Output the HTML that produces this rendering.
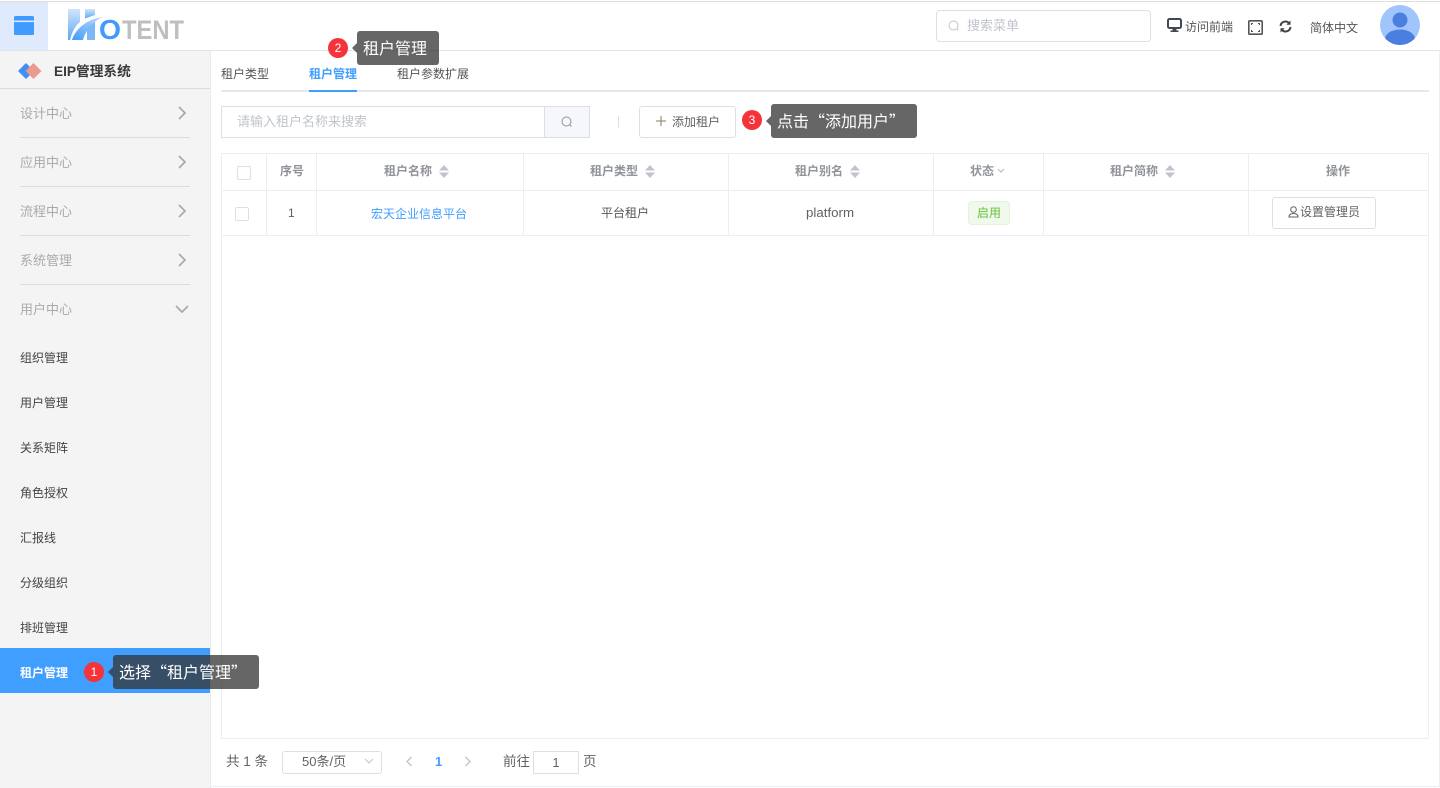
<!DOCTYPE html>
<html lang="zh"><head><meta charset="utf-8"><title>租户管理</title>
<style>
*{box-sizing:border-box}
html,body{margin:0;padding:0;width:1440px;height:788px;overflow:hidden;background:#fff}
body{position:relative;font-family:"Liberation Sans","Noto Sans CJK SC",sans-serif;font-size:12px;color:#555}
.a{position:absolute}
.t{position:absolute;white-space:nowrap;line-height:16px;height:16px}
.side{left:0;top:51px;width:210px;height:737px;background:#f4f4f4}
.hr{position:absolute;left:20px;width:170px;height:1px;background:#dcdcdc}
.g{color:#aaa;font-size:13px;left:20px}
.m{color:#444;font-size:12px;left:20px}
.tip{position:absolute;background:rgba(51,51,51,.75);border-radius:3px;color:#fff;font-family:"Noto Sans CJK SC",sans-serif;font-size:16px;line-height:32px;height:34px;white-space:nowrap;padding-left:6px}
.tip:before{content:"";position:absolute;left:-5px;top:12px;border:5px solid transparent;border-left:0;border-right-color:rgba(51,51,51,.75)}
.dot{position:absolute;width:20px;height:20px;border-radius:50%;background:#f5333a;color:#fff;font-size:12px;line-height:20px;text-align:center}
.v{position:absolute;top:154px;width:1px;height:82px;background:#ebeef5}
.h{position:absolute;left:222px;width:1206px;height:1px;background:#ebeef5}
.th{color:#909399;font-weight:bold;font-size:12px;top:163px;text-align:center}
.sort{position:absolute;top:165px;width:10px;height:13px}
.cb{position:absolute;width:14px;height:14px;border:1px solid #dcdfe6;border-radius:2px;background:#fff}
svg{position:absolute;display:block}
</style></head><body>

<!-- top bar -->
<div class="a" style="left:0;top:1px;width:1440px;height:50px;background:#fff;border-top:1px solid #ddd;border-bottom:1px solid #e4e4e4"></div>
<div class="a" style="left:0;top:2px;width:48px;height:48px;background:#dfeafc"></div>
<svg style="left:14px;top:16px" width="20" height="19" viewBox="0 0 20 19"><rect width="20" height="19" rx="1.5" fill="#3f9bfd"/><rect y="4.5" width="20" height="1.6" fill="#dfeafc"/></svg>

<!-- logo -->
<svg style="left:66px;top:6px" width="122" height="38" viewBox="0 0 122 38">
<defs>
<linearGradient id="lg" x1="0" y1="0" x2="0" y2="1"><stop offset="0" stop-color="#d3e5f9"/><stop offset="1" stop-color="#5aa9f8"/></linearGradient>
<linearGradient id="lh" x1="0" y1="1" x2="1" y2="0"><stop offset="0" stop-color="#3f9bfd"/><stop offset="1" stop-color="#c5dcf6"/></linearGradient>
</defs>
<path d="M2 3H14V16C9 20 6 26 4 34H2z" fill="url(#lg)"/>
<path d="M6 34C9 24 20 13 37 11 28 15 20 23 17 34z" fill="url(#lh)"/>
<path d="M19 3H29V9L19 12.500z" fill="url(#lg)"/>
<path d="M21 22L29 16V34H21z" fill="#7ab8f8"/>
<text x="33" y="33" font-family="Liberation Sans" font-weight="bold" font-size="28" fill="#3f9bfd" textLength="22" lengthAdjust="spacingAndGlyphs">O</text>
<text x="56" y="33" font-family="Liberation Sans" font-weight="bold" font-size="27" fill="#bfbfbf" textLength="62" lengthAdjust="spacingAndGlyphs">TENT</text>
</svg>

<!-- top right -->
<div class="a" style="left:936px;top:10px;width:215px;height:32px;border:1px solid #dcdfe6;border-radius:4px;background:#fff"></div>
<svg style="left:948px;top:20px" width="12" height="12" viewBox="0 0 12 12" fill="none" stroke="#c0c4cc" stroke-width="1"><circle cx="5.5" cy="5.5" r="4.5"/><path d="M9 9l1.5 1.5"/></svg>
<div class="t" style="left:967px;top:18px;font-size:13px;color:#c0c4cc">搜索菜单</div>
<svg style="left:1167px;top:18px" width="15" height="15" viewBox="0 0 15 15"><rect x="1" y="1" width="13" height="9" rx="1.500" fill="none" stroke="#3c4a54" stroke-width="2"/><path d="M5.500 11h4v1.500h2V14H3.500v-1.500h2z" fill="#3c4a54"/></svg>
<div class="t" style="left:1185px;top:19px;color:#555">访问前端</div>
<svg style="left:1248px;top:20px" width="15" height="15" viewBox="0 0 15 15"><rect x=".8" y=".8" width="13.400" height="13.400" rx="1" fill="none" stroke="#555" stroke-width="1.600"/><path d="M3 3h2v1H4v1H3zM12 3v2h-1V4h-1V3zM12 12h-2v-1h1v-1h1zM3 12v-2h1v1h1v1z" fill="#555"/></svg>
<svg style="left:1279px;top:20px" width="13" height="13" viewBox="0 0 13 13" fill="none" stroke="#444" stroke-width="2"><path d="M1.500 6A5 5 0 0 1 10 3"/><path d="M11.500 7A5 5 0 0 1 3 10"/><path d="M11.500.5v4.200H7.300z" fill="#444" stroke="none"/><path d="M1.500 12.500V8.300h4.200z" fill="#444" stroke="none"/></svg>
<div class="t" style="left:1310px;top:20px;color:#555">简体中文</div>
<svg style="left:1380px;top:5px" width="40" height="40" viewBox="0 0 40 40"><defs><clipPath id="c"><circle cx="20" cy="20" r="20"/></clipPath></defs><circle cx="20" cy="20" r="20" fill="#a0c4fb"/><g clip-path="url(#c)" fill="#4a7fe0"><circle cx="20" cy="15" r="7.500"/><ellipse cx="20" cy="34" rx="15" ry="9.500"/></g></svg>

<!-- sidebar -->
<div class="a side"></div>
<div class="a" style="left:210px;top:51px;width:1px;height:737px;background:#e9ebf2"></div>
<svg style="left:18px;top:62px" width="24" height="18" viewBox="0 0 24 18"><path d="M8 1l8 8-8 8-8-8z" fill="#3f8ff5"/><path d="M15.500 1l8 8-8 8-8-8z" fill="#ec9a8d"/></svg>
<div class="t" style="left:54px;top:64px;font-size:13.700px;font-weight:bold;color:#3a3a3a">EIP管理系统</div>
<div class="a" style="left:0;top:88px;width:210px;height:1px;background:#dcdcdc"></div>
<div class="t g" style="top:106px">设计中心</div>
<div class="hr" style="top:137px"></div>
<div class="t g" style="top:155px">应用中心</div>
<div class="hr" style="top:186px"></div>
<div class="t g" style="top:204px">流程中心</div>
<div class="hr" style="top:235px"></div>
<div class="t g" style="top:253px">系统管理</div>
<div class="hr" style="top:284px"></div>
<div class="t g" style="top:302px">用户中心</div>
<svg style="left:176px;top:106px" width="12" height="14" viewBox="0 0 12 14" fill="none" stroke="#a9a9a9" stroke-width="1.700"><path d="M3 1l6 6-6 6"/></svg>
<svg style="left:176px;top:155px" width="12" height="14" viewBox="0 0 12 14" fill="none" stroke="#a9a9a9" stroke-width="1.700"><path d="M3 1l6 6-6 6"/></svg>
<svg style="left:176px;top:204px" width="12" height="14" viewBox="0 0 12 14" fill="none" stroke="#a9a9a9" stroke-width="1.700"><path d="M3 1l6 6-6 6"/></svg>
<svg style="left:176px;top:253px" width="12" height="14" viewBox="0 0 12 14" fill="none" stroke="#a9a9a9" stroke-width="1.700"><path d="M3 1l6 6-6 6"/></svg>
<svg style="left:175px;top:304px" width="14" height="10" viewBox="0 0 14 10" fill="none" stroke="#a9a9a9" stroke-width="1.700"><path d="M1 2l6 6 6-6"/></svg>
<div class="t m" style="top:350px">组织管理</div>
<div class="t m" style="top:395px">用户管理</div>
<div class="t m" style="top:440px">关系矩阵</div>
<div class="t m" style="top:485px">角色授权</div>
<div class="t m" style="top:530px">汇报线</div>
<div class="t m" style="top:575px">分级组织</div>
<div class="t m" style="top:620px">排班管理</div>
<div class="a" style="left:0;top:648px;width:210px;height:45px;background:#409eff"></div>
<div class="t m" style="top:665px;color:#fff;font-weight:bold">租户管理</div>

<!-- tabs -->
<div class="t" style="left:221px;top:66px;color:#555">租户类型</div>
<div class="t" style="left:309px;top:66px;color:#409eff;font-weight:bold">租户管理</div>
<div class="t" style="left:397px;top:66px;color:#555">租户参数扩展</div>
<div class="a" style="left:221px;top:90px;width:1208px;height:2px;background:#e4e7ed"></div>
<div class="a" style="left:309px;top:90px;width:48px;height:2px;background:#409eff"></div>

<!-- search -->
<div class="a" style="left:221px;top:106px;width:369px;height:32px;border:1px solid #dcdfe6;background:#fff"></div>
<div class="a" style="left:544px;top:106px;width:46px;height:32px;border:1px solid #dcdfe6;background:#f5f7fa"></div>
<div class="t" style="left:237px;top:114px;font-size:13px;color:#c0c4cc">请输入租户名称来搜索</div>
<svg style="left:561px;top:116px" width="12" height="12" viewBox="0 0 12 12" fill="none" stroke="#909399" stroke-width="1"><circle cx="5.500" cy="5.500" r="4.500"/><path d="M9 9l1.500 1.500"/></svg>
<div class="a" style="left:618px;top:116px;width:1px;height:12px;background:#dcdfe6"></div>
<div class="a" style="left:639px;top:106px;width:97px;height:32px;border:1px solid #dcdfe6;border-radius:3px;background:#fff"></div>
<svg style="left:656px;top:116px" width="10" height="10" viewBox="0 0 10 10" stroke="#8a7a66" stroke-width="1"><path d="M5 0v10M0 5h10"/></svg>
<div class="t" style="left:672px;top:114px;color:#606266">添加租户</div>

<!-- table -->
<div class="a" style="left:221px;top:153px;width:1208px;height:586px;border:1px solid #ebeef5"></div>
<div class="h" style="top:190px"></div>
<div class="h" style="top:235px"></div>
<div class="v" style="left:266px"></div>
<div class="v" style="left:316px"></div>
<div class="v" style="left:523px"></div>
<div class="v" style="left:728px"></div>
<div class="v" style="left:933px"></div>
<div class="v" style="left:1043px"></div>
<div class="v" style="left:1248px"></div>
<div class="cb" style="left:237px;top:166px"></div>
<div class="cb" style="left:235px;top:207px"></div>
<div class="t th" style="left:280px">序号</div>
<div class="t th" style="left:384px">租户名称</div>
<div class="t th" style="left:590px">租户类型</div>
<div class="t th" style="left:795px">租户别名</div>
<div class="t th" style="left:970px">状态</div>
<div class="t th" style="left:1110px">租户简称</div>
<div class="t th" style="left:1326px">操作</div>
<svg class="sort" style="left:439px" viewBox="0 0 10 13" fill="#c0c4cc"><path d="M5 0l5 5.500H0zM5 13l5-5.500H0z"/></svg>
<svg class="sort" style="left:645px" viewBox="0 0 10 13" fill="#c0c4cc"><path d="M5 0l5 5.500H0zM5 13l5-5.500H0z"/></svg>
<svg class="sort" style="left:850px" viewBox="0 0 10 13" fill="#c0c4cc"><path d="M5 0l5 5.500H0zM5 13l5-5.500H0z"/></svg>
<svg class="sort" style="left:1165px" viewBox="0 0 10 13" fill="#c0c4cc"><path d="M5 0l5 5.500H0zM5 13l5-5.500H0z"/></svg>
<svg style="left:997px;top:168px" width="8" height="6" viewBox="0 0 8 6" fill="none" stroke="#b4b7bd" stroke-width="1"><path d="M1 1l3 3 3-3"/></svg>
<div class="t" style="left:288px;top:205px;color:#606266">1</div>
<div class="t" style="left:371px;top:206px;color:#409eff">宏天企业信息平台</div>
<div class="t" style="left:601px;top:205px;color:#555">平台租户</div>
<div class="t" style="left:806px;top:205px;color:#606266;font-size:13.300px">platform</div>
<div class="a" style="left:968px;top:201px;width:42px;height:24px;background:#f0f9eb;border:1px solid #e1f3d8;border-radius:4px;color:#67c23a;text-align:center;line-height:22px">启用</div>
<div class="a" style="left:1272px;top:197px;width:104px;height:32px;border:1px solid #dcdfe6;border-radius:3px;background:#fff"></div>
<svg style="left:1288px;top:206px" width="11" height="12" viewBox="0 0 11 12" fill="none" stroke="#606266" stroke-width="1"><circle cx="5.500" cy="3.500" r="2.800"/><path d="M1 11c0-2.500 2-3.500 4.500-3.500s4.500 1 4.500 3.500z"/></svg>
<div class="t" style="left:1300px;top:204px;color:#606266">设置管理员</div>

<!-- pagination -->
<div class="t" style="left:226px;top:754px;font-size:13.500px;color:#606266">共 1 条</div>
<div class="a" style="left:282px;top:751px;width:100px;height:23px;border:1px solid #dcdfe6;border-radius:3px"></div>
<div class="t" style="left:302px;top:754px;font-size:13px;color:#606266">50条/页</div>
<svg style="left:364px;top:758px" width="10" height="7" viewBox="0 0 10 7" fill="none" stroke="#c0c4cc" stroke-width="1"><path d="M1 1l4 4 4-4"/></svg>
<svg style="left:405px;top:756px" width="8" height="11" viewBox="0 0 8 11" fill="none" stroke="#c0c4cc" stroke-width="1.400"><path d="M6.500 1L2 5.500 6.500 10"/></svg>
<div class="t" style="left:435px;top:754px;font-size:13px;font-weight:bold;color:#409eff">1</div>
<svg style="left:464px;top:756px" width="8" height="11" viewBox="0 0 8 11" fill="none" stroke="#c0c4cc" stroke-width="1.400"><path d="M1.500 1L6 5.500 1.500 10"/></svg>
<div class="t" style="left:503px;top:754px;font-size:13.500px;color:#606266">前往</div>
<div class="a" style="left:533px;top:751px;width:46px;height:23px;border:1px solid #dcdfe6;text-align:center;line-height:21px;font-size:13px;color:#606266">1</div>
<div class="t" style="left:583px;top:754px;font-size:13.500px;color:#606266">页</div>
<div class="a" style="left:211px;top:786px;width:1229px;height:1px;background:#ebeef5"></div>
<div class="a" style="left:1439px;top:51px;width:1px;height:736px;background:#ebeef5"></div>

<!-- annotations -->
<div class="dot" style="left:84px;top:662px">1</div>
<div class="tip" style="left:113px;top:655px;width:146px">选择“租户管理”</div>
<div class="dot" style="left:328px;top:38px">2</div>
<div class="tip" style="left:357px;top:31px;width:82px">租户管理</div>
<div class="dot" style="left:742px;top:110px">3</div>
<div class="tip" style="left:771px;top:104px;width:146px">点击“添加用户”</div>
</body></html>
